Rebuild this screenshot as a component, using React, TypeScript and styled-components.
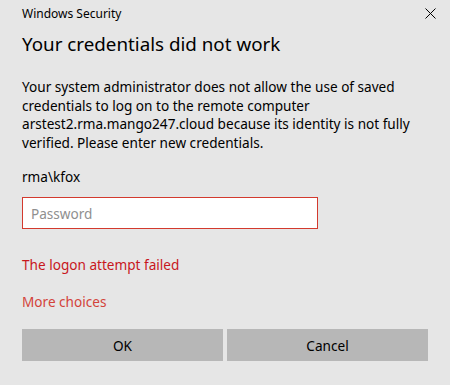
import React from 'react';
import styled, { createGlobalStyle } from 'styled-components';

const GlobalStyle = createGlobalStyle`
  html, body {
    margin: 0;
    padding: 0;
    background: #e6e6e6;
  }
  body {
    font-family: "Noto Sans", "Open Sans", sans-serif;
    color: #000;
  }
`;

const Dialog = styled.div`
  width: 450px;
  height: 385px;
  background: #e6e6e6;
  display: flex;
  flex-direction: column;
  box-sizing: border-box;
  padding: 0 22px;
`;

const TitleBar = styled.div`
  display: flex;
  justify-content: space-between;
  align-items: center;
  height: 26px;
  margin-right: -15px;
`;

const AppName = styled.span`
  font-size: 12px;
  color: #000;
`;

const CloseButton = styled.button`
  width: 26px;
  height: 26px;
  border: none;
  background: transparent;
  display: flex;
  align-items: center;
  justify-content: center;
  padding: 0;
`;

const Heading = styled.h1`
  margin: 4px 0 0;
  font-size: 18.8px;
  font-weight: 400;
  line-height: 28px;
`;

const Message = styled.p`
  margin: 20px 0 0;
  font-size: 13.6px;
  line-height: 18.5px;
`;

const UserName = styled.div`
  margin-top: 15px;
  font-size: 13.6px;
  line-height: 19px;
`;

const PasswordInput = styled.input`
  margin-top: 11px;
  width: 296px;
  height: 32px;
  box-sizing: border-box;
  border: 1px solid #d33a2e;
  background: #fff;
  padding: 0 8px;
  font-family: inherit;
  font-size: 13.6px;
  outline: none;
  caret-color: #000;

  &::placeholder {
    color: #8f8f8f;
  }
`;

const StatusText = styled.div<{ $tone: 'error' | 'link' }>`
  font-size: 13.6px;
  line-height: 19px;
  color: ${p => (p.$tone === 'error' ? '#c8171c' : '#d3433a')};
  margin-top: ${p => (p.$tone === 'error' ? '26px' : '18px')};
`;

const ButtonRow = styled.div`
  display: grid;
  grid-template-columns: 1fr 1fr;
  gap: 4px;
  margin-top: 18px;
`;

const ActionButton = styled.button`
  height: 32px;
  border: none;
  background: #b7b7b7;
  font-family: inherit;
  font-size: 13.6px;
  color: #000;
`;

const App: React.FC = () => {
  return (
    <>
      <GlobalStyle />
      <Dialog>
        <TitleBar>
          <AppName>Windows Security</AppName>
          <CloseButton aria-label="Close">
            <svg width="11" height="11" viewBox="0 0 11 11">
              <path d="M0.5 0.5 L10.5 10.5 M10.5 0.5 L0.5 10.5" stroke="#000" strokeWidth="1" />
            </svg>
          </CloseButton>
        </TitleBar>
        <Heading>Your credentials did not work</Heading>
        <Message>
          Your system administrator does not allow the use of saved credentials to log on to the remote computer
          arstest2.rma.mango247.cloud because its identity is not fully verified. Please enter new credentials.
        </Message>
        <UserName>rma\kfox</UserName>
        <PasswordInput type="password" placeholder="Password" autoFocus />
        <StatusText $tone="error">The logon attempt failed</StatusText>
        <StatusText $tone="link">More choices</StatusText>
        <ButtonRow>
          <ActionButton>OK</ActionButton>
          <ActionButton>Cancel</ActionButton>
        </ButtonRow>
      </Dialog>
    </>
  );
};

export default App;
